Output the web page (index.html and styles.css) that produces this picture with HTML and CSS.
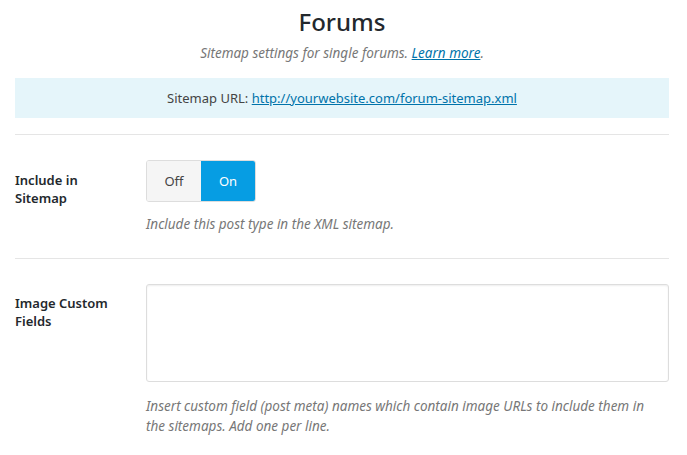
FILE: index.html
```html
<!DOCTYPE html>
<html>
<head>
<meta charset="utf-8">
<link rel="stylesheet" href="styles.css">
</head>
<body>
<div class="page">
  <header class="head">
    <h1 class="title">Forums</h1>
    <p class="subtitle">Sitemap settings for single forums. <a href="#">Learn more</a>.</p>
  </header>
  <div class="notice">Sitemap URL: <a href="#">http://yourwebsite.com/forum-sitemap.xml</a></div>
  <div class="row">
    <div class="label">Include in Sitemap</div>
    <div class="field">
      <div class="toggle">
        <span class="opt">Off</span>
        <span class="opt on">On</span>
      </div>
      <p class="desc">Include this post type in the XML sitemap.</p>
    </div>
  </div>
  <div class="row">
    <div class="label label-area">Image Custom Fields</div>
    <div class="field">
      <textarea class="area"></textarea>
      <p class="desc desc-area">Insert custom field (post meta) names which contain image URLs to include them in the sitemaps. Add one per line.</p>
    </div>
  </div>
</div>
</body>
</html>
```
FILE: styles.css
```css
html, body { margin: 0; padding: 0; background: #fff; }
body {
  font-family: "Noto Sans", "Open Sans", sans-serif;
  color: #23282d;
  font-size: 13px;
}
.page { padding: 0 18px 0 15px; }
.head { text-align: center; padding-top: 6px; }
.title {
  margin: 0;
  font-size: 24px;
  font-weight: 500;
  line-height: 32px;
  color: #23282d;
}
.subtitle {
  margin: 5px 0 0;
  font-style: italic;
  color: #777;
  font-size: 13.5px;
  line-height: 20px;
}
a { color: #0073aa; text-decoration: underline; }
.notice {
  margin-top: 15px;
  background: #e5f5fa;
  height: 40px;
  line-height: 40px;
  text-align: center;
  font-size: 13px;
  color: #444;
}
.row {
  display: flex;
  border-top: 1px solid #e5e5e5;
  margin-top: 16px;
  padding-top: 25px;
  padding-bottom: 24px;
}
.row + .row { margin-top: 0; }
.label {
  width: 131px;
  flex: none;
  font-weight: 600;
  font-size: 13px;
  line-height: 18px;
  padding-top: 11px;
  color: #23282d;
  padding-right: 20px;
  box-sizing: border-box;
}
.label-area { padding-top: 10px; }
.field { flex: 1; }
.toggle {
  display: inline-flex;
  border: 1px solid #ddd;
  border-radius: 3px;
  overflow: hidden;
  height: 42px;
  box-sizing: border-box;
}
.opt {
  width: 54px;
  display: flex;
  align-items: center;
  justify-content: center;
  background: #f5f5f5;
  color: #444;
  font-size: 13px;
}
.opt.on { background: #069de3; color: #fff; }
.desc {
  margin: 12px 0 0;
  padding-right: 20px;
  font-style: italic;
  color: #777;
  font-size: 13.5px;
  line-height: 20px;
}
.desc-area { margin-top: 14px; }
.area {
  display: block;
  width: 100%;
  height: 98px;
  box-sizing: border-box;
  border: 1px solid #ddd;
  border-radius: 3px;
  box-shadow: inset 0 1px 2px rgba(0,0,0,0.07);
  resize: none;
  margin: 0;
}
```
